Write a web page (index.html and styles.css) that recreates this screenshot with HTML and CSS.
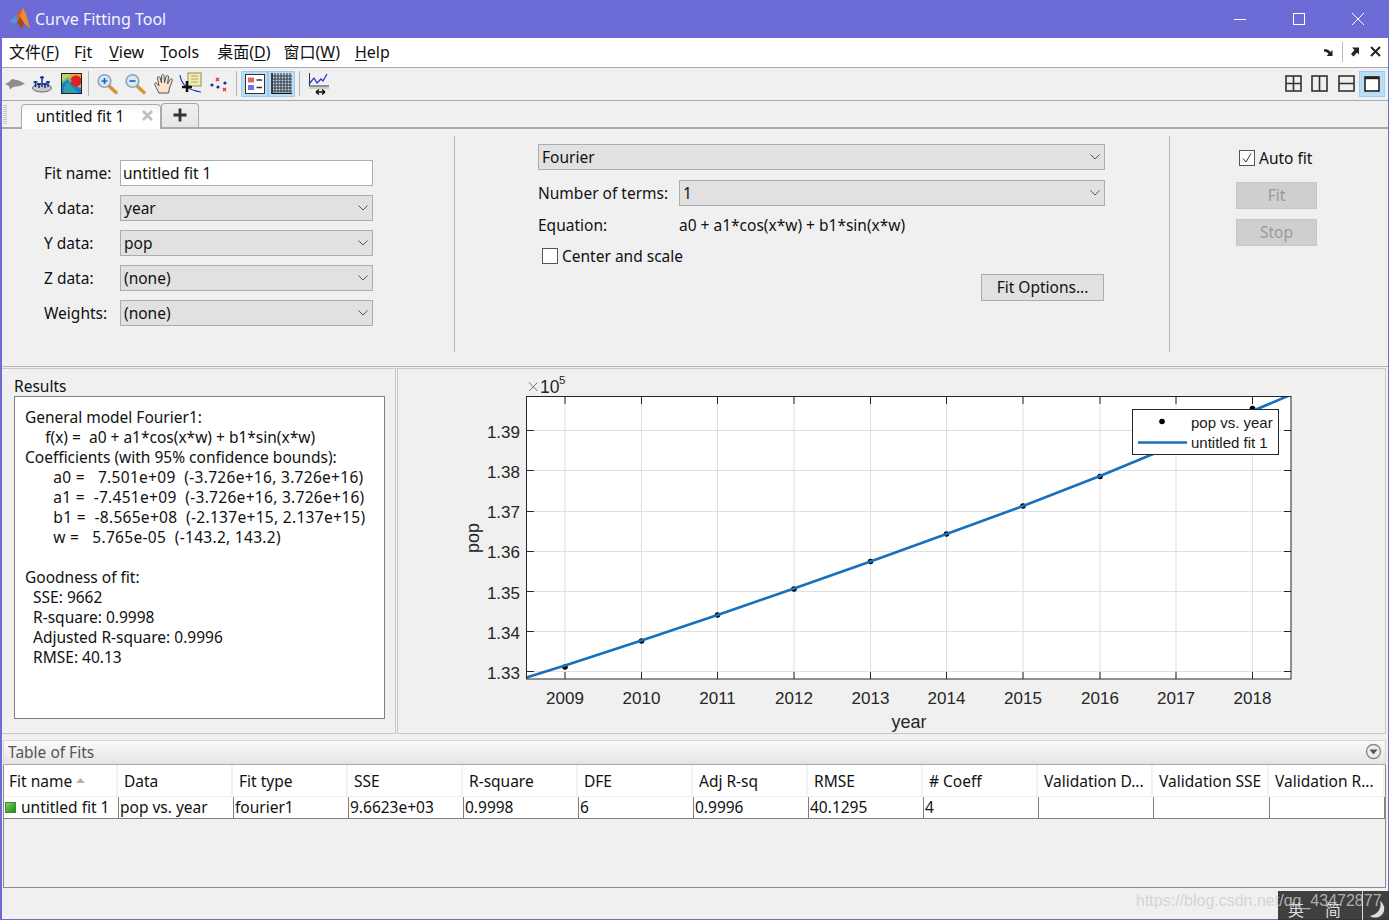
FILE: index.html
```html
<!DOCTYPE html>
<html lang="zh">
<head>
<meta charset="utf-8">
<title>Curve Fitting Tool</title>
<link rel="stylesheet" href="styles.css">
</head>
<body>
<div class="window">
  <header class="titlebar">
    <svg class="logo" width="22" height="22" viewBox="0 0 22 22"><polygon points="0,13 7,8 10,12 5,16" fill="#4f97d6"/><polygon points="7,8 14,0 12,8 10,12" fill="#d8641f"/><polygon points="14,0 17,6 21,20 15,15 11,9" fill="#f08a2e"/><polygon points="11,9 15,15 13,21 8,14" fill="#a6481a"/></svg>
    <span class="title-text">Curve Fitting Tool</span>
    <div class="win-controls">
      <svg width="14" height="14" viewBox="0 0 14 14"><path d="M1 7.5H13" stroke="#fff" stroke-width="1"/></svg>
      <svg width="14" height="14" viewBox="0 0 14 14"><rect x="1.5" y="1.5" width="11" height="11" fill="none" stroke="#fff"/></svg>
      <svg width="14" height="14" viewBox="0 0 14 14"><path d="M1 1L13 13M13 1L1 13" stroke="#fff" stroke-width="1"/></svg>
    </div>
  </header>

  <nav class="menubar">
    <span class="menu m1">文件(<u>F</u>)</span>
    <span class="menu m2">F<u>i</u>t</span>
    <span class="menu m3"><u>V</u>iew</span>
    <span class="menu m4"><u>T</u>ools</span>
    <span class="menu m5">桌面(<u>D</u>)</span>
    <span class="menu m6">窗口(<u>W</u>)</span>
    <span class="menu m7"><u>H</u>elp</span>
    <div class="menu-tools">
      <svg width="12" height="12" viewBox="0 0 12 12"><path d="M1 3.5C4 2.5 6 4 7.5 6L9.5 4V10H3.5L5.6 8C4.5 6.5 3 5.5 1 5.5Z" fill="#222"/></svg>
      <i class="menu-sep"></i>
      <svg width="10" height="12" viewBox="0 0 10 12"><path d="M2 1.5H9V8.5L7 6.5L3.5 10.5L1 8L4.5 4L2 1.5Z" fill="#222"/></svg>
      <svg class="menu-x" width="11" height="11" viewBox="0 0 11 11"><path d="M1 1L10 10M10 1L1 10" stroke="#222" stroke-width="2"/></svg>
    </div>
  </nav>

  <div class="toolbar">
    <svg class="ic ic-fish" width="22" height="14" viewBox="0 0 22 14"><path d="M1 7L5 5L8 2L15 3.5L21 6.5L16 9L9 10L6 12.5L5 9Z" fill="#8d8d8d"/></svg>
    <svg class="ic ic-axes" width="22" height="20" viewBox="0 0 22 20"><ellipse cx="11" cy="14" rx="9.5" ry="4" fill="#c9c9c9" stroke="#666"/><path d="M11 2V13M4.5 7V13M17 7V13M8 9V14M14 9V14" stroke="#0a2f8f" stroke-width="1.5"/><path d="M2.5 8H6.5M9 3.5H13M15 8H19M6 10H10M12 10H16" stroke="#0a2f8f" stroke-width="1.5"/></svg>
    <svg class="ic ic-map" width="21" height="21" viewBox="0 0 21 21"><defs><filter id="bl"><feGaussianBlur stdDeviation="0.7"/></filter></defs><rect width="21" height="21" fill="#d9a03a"/><g filter="url(#bl)"><rect width="21" height="21" fill="#e9a53a"/><path d="M0 21V10L6 5L12 11L21 16V21Z" fill="#1f7fc9"/><path d="M3 21V14L7 9L12 15L18 21Z" fill="#2ea0a8"/><path d="M0 0H11L7 5L0 9Z" fill="#c0d36a"/><circle cx="15" cy="8" r="5.5" fill="#d8222a"/><path d="M0 10L7 5L10 9" fill="none" stroke="#72c26a" stroke-width="2"/></g><rect x=".5" y=".5" width="20" height="20" fill="none" stroke="#222"/></svg>
    <i class="tool-sep sep-a"></i>
    <svg class="ic ic-zin" width="22" height="22" viewBox="0 0 22 22"><path d="M12.5 12.5L20 19.5" stroke="#d8932f" stroke-width="3.4" stroke-linecap="round"/><circle cx="8.5" cy="8" r="6.3" fill="#d7e8f7" stroke="#8aa4bd" stroke-width="1.6"/><path d="M5.5 8H11.5M8.5 5V11" stroke="#2b62a6" stroke-width="1.7"/></svg>
    <svg class="ic ic-zout" width="22" height="22" viewBox="0 0 22 22"><path d="M12.5 12.5L20 19.5" stroke="#d8932f" stroke-width="3.4" stroke-linecap="round"/><circle cx="8.5" cy="8" r="6.3" fill="#d7e8f7" stroke="#8aa4bd" stroke-width="1.6"/><path d="M5.5 8H11.5" stroke="#2b62a6" stroke-width="1.7"/></svg>
    <svg class="ic ic-hand" width="22" height="22" viewBox="0 0 22 22"><path d="M6 20L2 12C1 10 3 9 4 10.500L6 13L4.500 5C4.500 3.500 6.500 3 7 4.500L8.500 10L8.500 3C8.500 1 11 1 11 3L11.500 10L13 3.500C13.500 1.800 15.800 2.300 15.500 4L14.500 11L17 6.500C18 5 20 6 19.300 7.500L16.500 15L15.500 20Z" fill="#fbe3cf" stroke="#555" stroke-width="1"/></svg>
    <svg class="ic ic-cursor" width="24" height="24" viewBox="0 0 24 24"><path d="M1 3C2 12 8 18 22 20" fill="none" stroke="#2330c8" stroke-width="1.200"/><rect x="9" y="1" width="13" height="13" fill="#f3eeb0" stroke="#8d8d5a"/><path d="M12 4H19M12 7H19M12 10H19" stroke="#a9a66a"/><path d="M8 9V20M3 15H13" stroke="#111" stroke-width="2.600"/></svg>
    <svg class="ic ic-dots" width="18" height="16" viewBox="0 0 18 16"><circle cx="2" cy="9" r="1.600" fill="#1a2e9c"/><circle cx="8" cy="11" r="1.600" fill="#1a2e9c"/><circle cx="15" cy="7" r="1.600" fill="#1a2e9c"/><path d="M6 2L9 5M9 2L6 5M13 12L16 15M16 12L13 15" stroke="#d83a3a" stroke-width="1.400"/></svg>
    <i class="tool-sep sep-b"></i>
    <span class="tbtn btn-legend"><svg width="20" height="20" viewBox="0 0 20 20"><rect x=".5" y=".5" width="19" height="19" fill="#fff" stroke="#333"/><rect x="3" y="3.500" width="6" height="5" fill="#e2646a"/><rect x="3" y="11" width="6" height="5" fill="#6f74dc"/><path d="M11.500 6H17M11.500 13.500H17" stroke="#333" stroke-width="1.500"/></svg></span>
    <span class="tbtn btn-grid"><svg width="21" height="21" viewBox="0 0 21 21"><path d="M1 0V20.500H21" fill="none" stroke="#111" stroke-width="1.500"/><path d="M4 0V19M7 0V19M10 0V19M13 0V19M16 0V19M19 0V19M1 3H21M1 6H21M1 9H21M1 12H21M1 15H21M1 18H21" stroke="#333" stroke-width="1"/></svg></span>
    <i class="tool-sep sep-c"></i>
    <svg class="ic ic-res" width="22" height="24" viewBox="0 0 22 24"><path d="M1.500 1V14H21" fill="none" stroke="#333"/><path d="M1 12L6 6L9 11L13 7L15 9L19 2" fill="none" stroke="#2438c8" stroke-width="1.300"/><path d="M1 16H21" stroke="#aaa"/><path d="M8 20H17M8 20L11 17.500M8 20L11 22.500M17 20L14 17.500M17 20L14 22.500" fill="none" stroke="#111" stroke-width="1.500"/></svg>
    <div class="layout-tools">
      <svg class="lay" width="17" height="17" viewBox="0 0 17 17"><rect x="1" y="1" width="15" height="15" fill="none" stroke="#333" stroke-width="1.600"/><path d="M8.500 1V16M1 8.500H16" stroke="#333" stroke-width="1.600"/></svg>
      <svg class="lay" width="17" height="17" viewBox="0 0 17 17"><rect x="1" y="1" width="15" height="15" fill="none" stroke="#333" stroke-width="1.600"/><path d="M8.500 1V16" stroke="#333" stroke-width="1.600"/></svg>
      <svg class="lay" width="17" height="17" viewBox="0 0 17 17"><rect x="1" y="1" width="15" height="15" fill="none" stroke="#333" stroke-width="1.600"/><path d="M1 8.500H16" stroke="#333" stroke-width="1.600"/></svg>
      <span class="lay-on"><svg width="16" height="16" viewBox="0 0 16 16"><rect x="1" y="1" width="14" height="14" fill="#fff" stroke="#222" stroke-width="1.600"/><path d="M1 2H15" stroke="#222" stroke-width="2.400"/></svg></span>
    </div>
  </div>

  <div class="tabbar">
    <span class="grip"></span>
    <div class="tab tab-on">
      <span>untitled fit 1</span>
      <svg width="13" height="13" viewBox="0 0 13 13"><path d="M2 2L11 11M11 2L2 11" stroke="#bdbdbd" stroke-width="2.600"/></svg>
    </div>
    <div class="tab tab-add"><svg width="14" height="14" viewBox="0 0 14 14"><path d="M0.500 7H13.500M7 .5V13.500" stroke="#333" stroke-width="2.800"/></svg></div>
  </div>

  <section class="fit-panel">
    <div class="fit-left">
      <label class="f-label">Fit name:</label><div class="field input">untitled fit 1</div>
      <label class="f-label">X data:</label><div class="field select"><span>year</span><svg class="chev" width="10" height="6" viewBox="0 0 10 6"><path d="M.5 .5L5 5L9.500 .5" fill="none" stroke="#555"/></svg></div>
      <label class="f-label">Y data:</label><div class="field select"><span>pop</span><svg class="chev" width="10" height="6" viewBox="0 0 10 6"><path d="M.5 .5L5 5L9.500 .5" fill="none" stroke="#555"/></svg></div>
      <label class="f-label">Z data:</label><div class="field select"><span>(none)</span><svg class="chev" width="10" height="6" viewBox="0 0 10 6"><path d="M.5 .5L5 5L9.500 .5" fill="none" stroke="#555"/></svg></div>
      <label class="f-label">Weights:</label><div class="field select"><span>(none)</span><svg class="chev" width="10" height="6" viewBox="0 0 10 6"><path d="M.5 .5L5 5L9.500 .5" fill="none" stroke="#555"/></svg></div>
    </div>
    <div class="fit-mid">
      <div class="field select type-select"><span>Fourier</span><svg class="chev" width="10" height="6" viewBox="0 0 10 6"><path d="M.5 .5L5 5L9.500 .5" fill="none" stroke="#555"/></svg></div>
      <div class="mid-row row-terms"><span class="mid-label">Number of terms:</span><div class="field select terms"><span>1</span><svg class="chev" width="10" height="6" viewBox="0 0 10 6"><path d="M.5 .5L5 5L9.500 .5" fill="none" stroke="#555"/></svg></div></div>
      <div class="mid-row row-eq"><span class="mid-label">Equation:</span><span>a0 + a1*cos(x*w) + b1*sin(x*w)</span></div>
      <div class="check-row center"><span class="box"></span><span>Center and scale</span></div>
      <div class="opt-wrap"><div class="btn opt">Fit Options...</div></div>
    </div>
    <div class="fit-right">
      <div class="check-row auto"><span class="box"><svg width="12" height="12" viewBox="0 0 12 12"><path d="M2 6.500L5 10L10 1.500" fill="none" stroke="#333" stroke-width="1"/></svg></span><span>Auto fit</span></div>
      <div class="btn dis">Fit</div>
      <div class="btn dis">Stop</div>
    </div>
  </section>

  <section class="work">
    <div class="results">
      <div class="res-title">Results</div>
      <div class="res-box">
        <div class="ln">General model Fourier1:</div>
        <div class="ln">     f(x) =  a0 + a1*cos(x*w) + b1*sin(x*w)</div>
        <div class="ln">Coefficients (with 95% confidence bounds):</div>
        <div class="ln co">       a0 =   7.501e+09  (-3.726e+16, 3.726e+16)</div>
        <div class="ln co">       a1 =  -7.451e+09  (-3.726e+16, 3.726e+16)</div>
        <div class="ln co">       b1 =  -8.565e+08  (-2.137e+15, 2.137e+15)</div>
        <div class="ln co">       w =   5.765e-05  (-143.2, 143.2)</div>
        <div class="ln gap">Goodness of fit:</div>
        <div class="ln">  SSE: 9662</div>
        <div class="ln">  R-square: 0.9998</div>
        <div class="ln">  Adjusted R-square: 0.9996</div>
        <div class="ln">  RMSE: 40.13</div>
      </div>
    </div>
    <div class="plot">
      <svg class="chart" width="987" height="364" viewBox="398 369 987 364">
        <defs><clipPath id="ax"><rect x="526.500" y="396.500" width="764.500" height="282.500"/></clipPath></defs>
        <rect x="526.500" y="396.500" width="764.500" height="282.500" fill="#fff"/>
        <g stroke="#dfdfdf" stroke-width="1">
          <path d="M565 397V679M641.500 397V679M717.500 397V679M794 397V679M870.500 397V679M946.500 397V679M1023 397V679M1100 397V679M1176 397V679M1252.500 397V679"/>
          <path d="M527 430.500H1291M527 470.500H1291M527 511.500H1291M527 551.500H1291M527 591.500H1291M527 631.500H1291M527 671.500H1291"/>
        </g>
        <g stroke="#262626" stroke-width="1">
          <path d="M565 397V404M641.500 397V404M717.500 397V404M794 397V404M870.500 397V404M946.500 397V404M1023 397V404M1100 397V404M1176 397V404M1252.500 397V404"/>
          <path d="M565 679V672M641.500 679V672M717.500 679V672M794 679V672M870.500 679V672M946.500 679V672M1023 679V672M1100 679V672M1176 679V672M1252.500 679V672"/>
          <path d="M527 430.500H534M527 470.500H534M527 511.500H534M527 551.500H534M527 591.500H534M527 631.500H534M527 671.500H534"/>
          <path d="M1291 430.500H1284M1291 470.500H1284M1291 511.500H1284M1291 551.500H1284M1291 591.500H1284M1291 631.500H1284M1291 671.500H1284"/>
        </g>
        <g clip-path="url(#ax)">
          <g fill="#000">
            <circle cx="565" cy="667" r="2.800"/><circle cx="641.500" cy="641" r="2.800"/><circle cx="717.500" cy="615" r="2.800"/><circle cx="794" cy="589" r="2.800"/><circle cx="870.500" cy="561.500" r="2.800"/><circle cx="946.500" cy="534" r="2.800"/><circle cx="1023" cy="506" r="2.800"/><circle cx="1100" cy="476.500" r="2.800"/><circle cx="1252.500" cy="408.500" r="2.800"/>
          </g>
          <polyline points="526.500,677.500 565,665.500 641.500,640.500 717.500,615 794,588.500 870.500,561.500 946.500,534 1023,506 1100,476 1176,444.500 1252.500,411 1289,395.500" fill="none" stroke="#1a6fbb" stroke-width="2.600"/>
        </g>
        <rect x="526.500" y="396.500" width="764.500" height="282.500" fill="none" stroke="#262626" stroke-width="1"/>
        <g class="tick-y" text-anchor="end">
          <text x="520" y="438">1.39</text><text x="520" y="478">1.38</text><text x="520" y="518">1.37</text><text x="520" y="558">1.36</text><text x="520" y="599">1.35</text><text x="520" y="639">1.34</text><text x="520" y="679">1.33</text>
        </g>
        <g class="tick-x" text-anchor="middle">
          <text x="565" y="704">2009</text><text x="641.500" y="704">2010</text><text x="717.500" y="704">2011</text><text x="794" y="704">2012</text><text x="870.500" y="704">2013</text><text x="946.500" y="704">2014</text><text x="1023" y="704">2015</text><text x="1100" y="704">2016</text><text x="1176" y="704">2017</text><text x="1252.500" y="704">2018</text>
        </g>
        <text class="ax-label" x="909" y="728" text-anchor="middle">year</text>
        <text class="ax-label" transform="translate(478.500 538) rotate(-90)" text-anchor="middle">pop</text>
        <path d="M529 382.500L537.500 391M537.500 382.500L529 391" stroke="#666" stroke-width=".9"/>
        <text class="exp" x="540" y="392.500">10</text><text class="exp-sup" x="559" y="384">5</text>
        <rect x="1132.500" y="409.500" width="146" height="45" fill="#fff" stroke="#262626" stroke-width="1"/>
        <circle cx="1162" cy="421.500" r="2.800" fill="#000"/>
        <path d="M1138 442.500H1187" stroke="#1a6fbb" stroke-width="2.600"/>
        <text class="legend" x="1191" y="428">pop vs. year</text>
        <text class="legend" x="1191" y="448">untitled fit 1</text>
      </svg>
    </div>
  </section>

  <section class="fits">
    <div class="fits-head">
      <span>Table of Fits</span>
      <svg width="17" height="17" viewBox="0 0 17 17"><circle cx="8.500" cy="8.500" r="7" fill="#eee" stroke="#888" stroke-width="1.400"/><path d="M4.500 6.500H12.500L8.500 11.500Z" fill="#555"/></svg>
    </div>
    <div class="fits-body">
      <div class="grid">
        <div class="th">Fit name<svg class="sort" width="9" height="5" viewBox="0 0 9 5"><path d="M0 5L4.500 0L9 5Z" fill="#b4b4a8"/></svg></div><div class="th">Data</div><div class="th">Fit type</div><div class="th">SSE</div><div class="th">R-square</div><div class="th">DFE</div><div class="th">Adj R-sq</div><div class="th">RMSE</div><div class="th"># Coeff</div><div class="th">Validation D...</div><div class="th">Validation SSE</div><div class="th">Validation R...</div>
        <div class="td first"><i class="swatch"></i>untitled fit 1</div><div class="td">pop vs. year</div><div class="td">fourier1</div><div class="td">9.6623e+03</div><div class="td">0.9998</div><div class="td">6</div><div class="td">0.9996</div><div class="td">40.1295</div><div class="td">4</div><div class="td"></div><div class="td"></div><div class="td"></div>
      </div>
    </div>
  </section>
</div>

<div class="ime"><span>英</span><span>简</span><i class="ime-sep"></i><svg width="20" height="22" viewBox="0 0 20 22"><path d="M13 3C15 9 12 16 3 18C7 21 15 20 17 13C18 9 16 5 13 3Z" fill="#ddd"/></svg></div>
<div class="watermark">https://blog.csdn.net/qq_43472877</div>
</body>
</html>
```
FILE: styles.css
```css
* { box-sizing: border-box; }
html, body { margin: 0; padding: 0; }
body { width: 1389px; height: 920px; overflow: hidden; position: relative; font-family: "Noto Sans", "Noto Sans CJK SC", sans-serif; font-size: 15.5px; color: #111; background: #f0f0f0; }
svg { display: block; flex: none; }

.window { width: 1389px; height: 920px; display: flex; flex-direction: column; border: 2px solid #6c6bd6; border-top: 0; border-right-width: 1px; border-bottom-width: 1px; background: #f0f0f0; }

.titlebar { height: 38px; margin: 0 -1px 0 -2px; background: #6c6bd6; display: flex; align-items: center; padding-left: 9px; color: #f4f4ff; flex: none; }
.logo { margin-right: 4px; }
.title-text { font-size: 16px; }
.win-controls { margin-left: auto; display: flex; gap: 45px; padding-right: 24px; }

.menubar { height: 30px; background: #fff; display: flex; align-items: center; flex: none; border-bottom: 1px solid #a9a9a9; line-height: 26px; padding-bottom: 2px; font-size: 16px; }
.menu { white-space: nowrap; }
.menu u { text-decoration-thickness: 1px; text-underline-offset: 2px; }
.m1 { margin-left: 7px; }
.m2 { margin-left: 15px; }
.m3 { margin-left: 17px; }
.m4 { margin-left: 16px; }
.m5 { margin-left: 18px; }
.m6 { margin-left: 13px; }
.m7 { margin-left: 15px; }
.menu-tools { margin-left: auto; display: flex; align-items: center; padding-right: 7px; }
.menu-sep { width: 1px; height: 20px; background: #bbb; margin: 0 7px 0 7px; }
.menu-x { margin-left: 10px; }

.toolbar { height: 33px; display: flex; align-items: center; flex: none; border-bottom: 1px solid #a9a9a9; padding-left: 2px; padding-bottom: 1px; }
.ic-axes { margin-left: 5px; }
.ic-map { margin-left: 8px; }
.tool-sep { width: 1px; height: 25px; background: #b5b5b5; }
.sep-a { margin: 0 7px 0 6px; }
.ic-zout { margin-left: 6px; }
.ic-hand { margin-left: 7px; }
.ic-cursor { margin-left: 4px; }
.ic-dots { margin-left: 7px; }
.sep-b { margin: 0 4px 0 8px; }
.tbtn { width: 27px; height: 26px; background: #bcdcf4; border: 1px solid #9fcbee; display: flex; align-items: center; justify-content: center; }
.sep-c { margin: 0 8px 0 4px; }
.layout-tools { margin-left: auto; display: flex; align-items: center; gap: 9.5px; padding-right: 3px; }
.lay { margin-left: -0.3px; }
.lay-on { width: 26px; height: 26px; margin-left: -5px; background: #bcdcf4; border: 1px solid #9fcbee; display: flex; align-items: center; justify-content: center; }

.tabbar { height: 28px; display: flex; align-items: flex-end; flex: none; border-bottom: 2px solid #a9a9a9; padding-left: 1px; }
.grip { width: 4px; height: 20px; margin: 0 14px 2px 0; background: repeating-linear-gradient(to bottom, #c5c5c5 0 1px, transparent 1px 2px); }
.tab { height: 24px; border: 1px solid #a9a9a9; border-bottom: 0; border-radius: 4px 4px 0 0; display: flex; align-items: center; }
.tab-on { width: 140px; height: 25px; margin-bottom: -2px; background: linear-gradient(#f4f4f4, #fff 40%); padding: 0 6px 3px 14px; justify-content: space-between; position: relative; z-index: 1; }
.tab-add { width: 38px; justify-content: center; padding-bottom: 1px; background: linear-gradient(#f0f0f0, #e6e6e6); }

.fit-panel { height: 238px; flex: none; display: flex; border-bottom: 1px solid #b5b5b5; padding-top: 7px; }
.fit-left { width: 453px; height: 216px; border-right: 1px solid #b9b9b9; display: grid; grid-template-columns: 76px 253px; grid-auto-rows: 26px; row-gap: 9px; padding: 24px 0 0 42px; align-items: center; align-content: start; flex: none; }
.f-label { white-space: nowrap; padding-bottom: 1px; }
.field { height: 26px; border: 1px solid #adadad; display: flex; align-items: center; padding: 0 0 1px 3px; }
.input { background: #fff; padding-left: 2px; }
.select { background: #e1e1e1; justify-content: space-between; padding-right: 4px; }
.chev { margin-top: 1px; }
.fit-mid { width: 715px; height: 216px; border-right: 1px solid #b9b9b9; padding: 8px 64px 0 83px; flex: none; }
.mid-row { display: flex; align-items: center; }
.mid-label { width: 141px; flex: none; white-space: nowrap; }
.row-terms { margin-top: 10px; }
.terms { flex: 1; }
.row-eq { height: 26px; margin-top: 6px; }
.check-row { display: flex; align-items: center; gap: 4px; }
.box { width: 16px; height: 16px; background: #fff; border: 1px solid #555; display: flex; align-items: center; justify-content: center; }
.center { height: 20px; margin: 8px 0 0 4px; }
.opt-wrap { display: flex; justify-content: flex-end; margin: 8px 1px 0 0; }
.btn { height: 27px; border: 1px solid #adadad; background: #e1e1e1; display: flex; align-items: center; justify-content: center; padding-bottom: 1px; }
.opt { width: 123px; }
.fit-right { padding: 12px 0 0 66px; display: flex; flex-direction: column; }
.auto { height: 20px; margin: 0 0 14px 3px; }
.dis { width: 81px; color: #9a9a9a; background: #cfcfcf; border-color: #c6c6c6; margin-bottom: 10px; }

.work { height: 366px; margin-top: 1px; flex: none; display: flex; gap: 1px; }
.results { width: 394px; border: 1px solid #c8c8c8; border-left: 0; padding: 7px 0 0 12px; flex: none; }
.res-title { height: 20px; line-height: 20px; }
.res-box { width: 371px; height: 323px; background: #fff; border: 1px solid #808080; padding: 10px 0 0 10px; line-height: 20px; overflow: hidden; }
.ln { white-space: pre; height: 20px; }
.co { letter-spacing: .3px; margin-left: -2px; }
.gap { margin-top: 20px; }
.plot { width: 989px; border: 1px solid #c8c8c8; flex: none; }
.chart text { font-family: "Liberation Sans", Arial, sans-serif; fill: #262626; }
.tick-x text, .tick-y text { font-size: 17px; }
.ax-label { font-size: 18px; }
.exp { font-size: 17.500px; }
.exp-sup { font-size: 11.500px; }
.chart .legend { font-size: 15px; fill: #1a1a1a; }

.fits { margin-top: 6px; flex: 1; display: flex; flex-direction: column; min-height: 0; padding-left: 1px; }
.fits-head { height: 25px; margin-right: 2px; background: linear-gradient(#fafafa, #e4e4e4); border: 1px solid #d5d5d5; border-bottom: 1px solid #a9a9a9; display: flex; align-items: center; justify-content: space-between; padding: 0 3px 2px 4px; color: #555; flex: none; }
.fits-body { height: 123px; margin-right: 2px; border: 1px solid #8c8c8c; border-top: 0; background: #f0f0f0; flex: none; }
.grid { display: grid; grid-template-columns: 114px repeat(9, 115px) 116px 116px; }
.th { height: 32px; background: #fff; border-right: 2px solid #f2f2f2; border-bottom: 1px solid #eee; display: flex; align-items: center; gap: 4px; padding-left: 5px; white-space: nowrap; overflow: hidden; }
.th:not(:first-child) { padding-left: 6px; }
.td { height: 22px; background: #fff; border-left: 1px solid #808080; border-bottom: 1px solid #808080; display: flex; align-items: center; padding: 0 0 1px 1px; white-space: nowrap; overflow: hidden; }
.td.first { border-left: 0; }
.td:last-child { border-right: 1px solid #808080; }
.sort { margin-top: -1px; }
.swatch { width: 11px; height: 11px; margin-right: 5px; background: linear-gradient(135deg, #7cd35c, #1d8a20); border: 1px solid #3b8c32; flex: none; }

.ime { position: absolute; right: 0; bottom: 0; width: 111px; height: 29px; background: rgba(48, 48, 48, .92); color: #ddd; display: flex; align-items: flex-end; font-size: 16px; line-height: 20px; padding-left: 10px; }
.ime span { width: 37px; }
.ime-sep { width: 1px; height: 29px; background: #ddd; margin-right: 4px; }
.watermark { position: absolute; left: 1136px; top: 891px; font-family: "Liberation Sans", sans-serif; font-size: 16px; line-height: 20px; color: rgba(205, 205, 205, .8); white-space: nowrap; }
```
